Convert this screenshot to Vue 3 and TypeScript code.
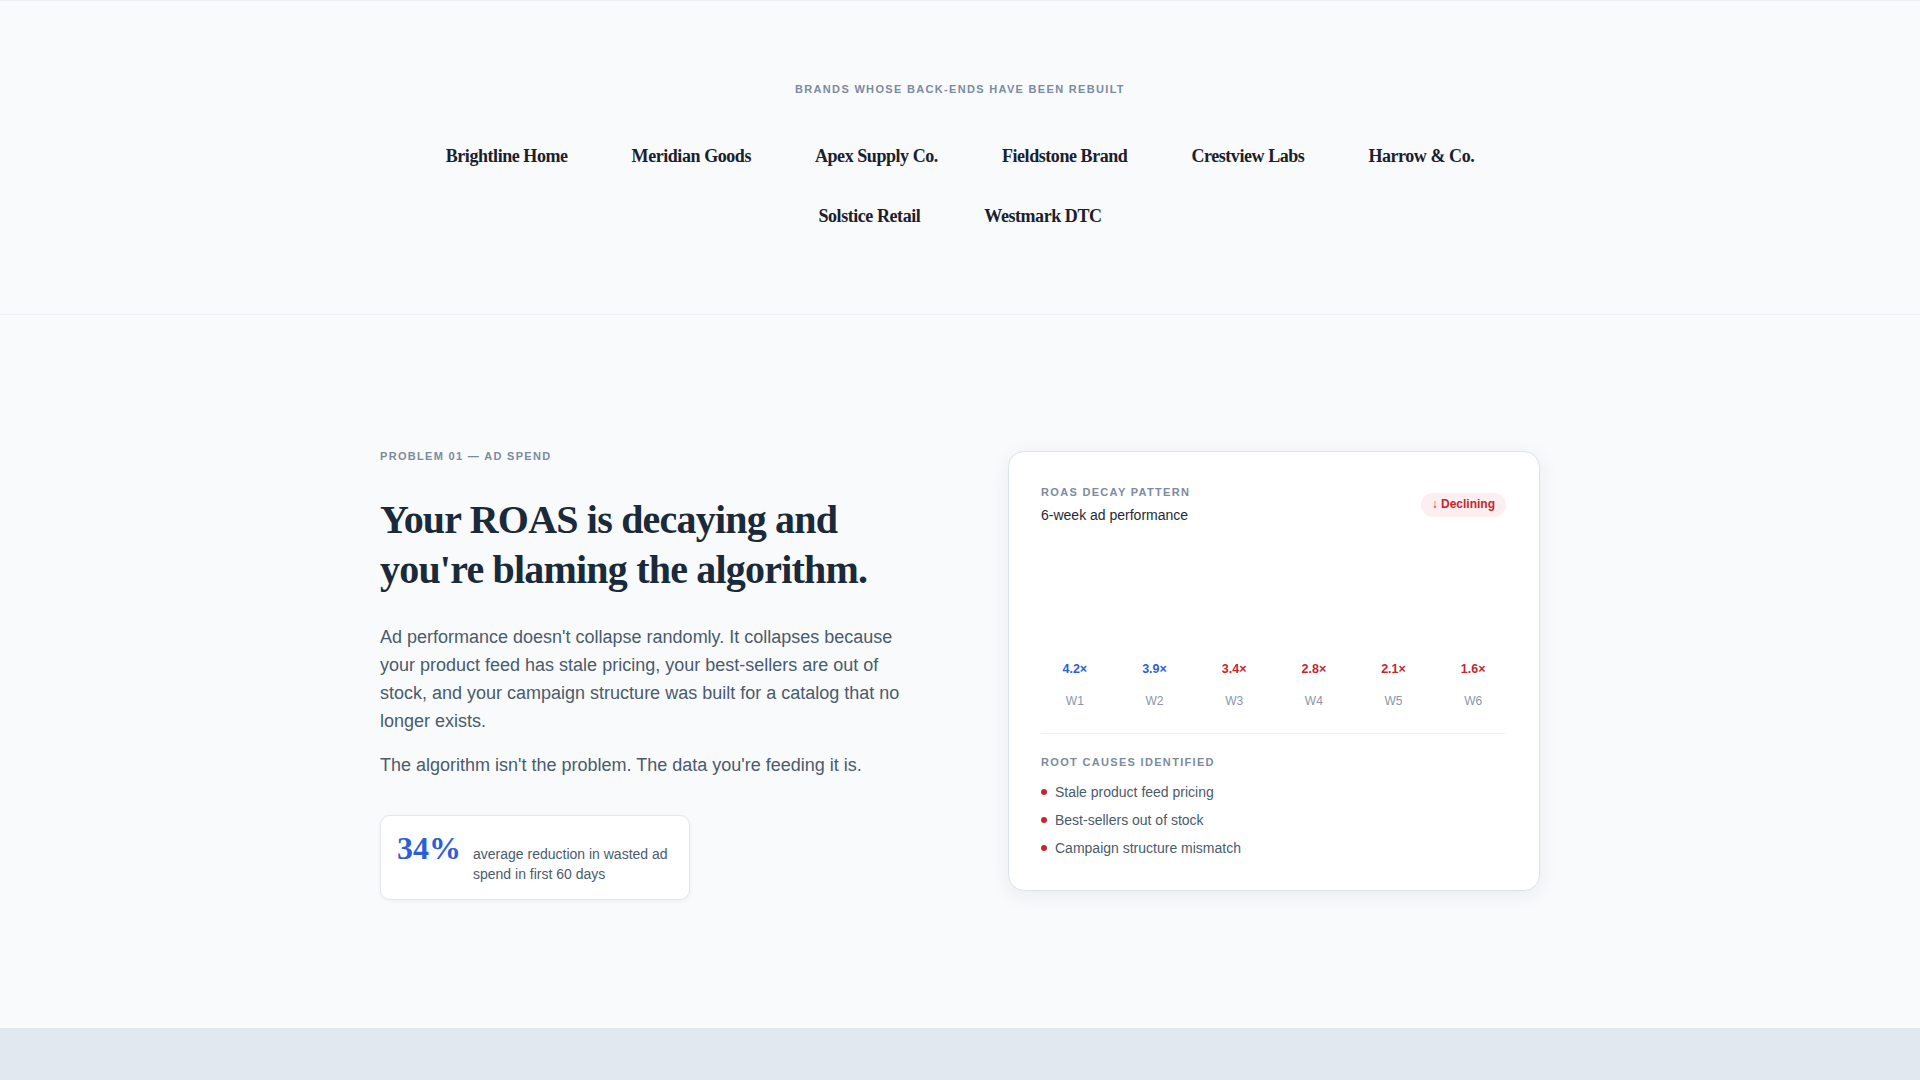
<template>
  <div class="page">
    <section class="brands">
      <p class="brands-label">BRANDS WHOSE BACK-ENDS HAVE BEEN REBUILT</p>
      <div class="brands-list">
        <span v-for="brand in brands" :key="brand" class="brand">{{ brand }}</span>
      </div>
    </section>

    <section class="problem">
      <div class="problem-inner">
        <div class="copy">
          <p class="eyebrow">PROBLEM 01 — AD SPEND</p>
          <h2 class="headline">Your ROAS is decaying and<br />you're blaming the algorithm.</h2>
          <p class="body">Ad performance doesn't collapse randomly. It collapses because your product feed has stale pricing, your best-sellers are out of stock, and your campaign structure was built for a catalog that no longer exists.</p>
          <p class="body">The algorithm isn't the problem. The data you're feeding it is.</p>
          <div class="stat">
            <span class="stat-number">34%</span>
            <span class="stat-text">average reduction in wasted ad spend in first 60 days</span>
          </div>
        </div>

        <div class="card">
          <div class="card-head">
            <div>
              <p class="card-label">ROAS DECAY PATTERN</p>
              <p class="card-title">6-week ad performance</p>
            </div>
            <span class="badge">↓ Declining</span>
          </div>

          <div class="chart">
            <div v-for="week in weeks" :key="week.name" class="week">
              <span class="week-value" :class="week.tone">{{ week.value }}</span>
              <span class="week-name">{{ week.name }}</span>
            </div>
          </div>

          <div class="causes">
            <p class="card-label">ROOT CAUSES IDENTIFIED</p>
            <ul class="cause-list">
              <li v-for="cause in causes" :key="cause" class="cause">{{ cause }}</li>
            </ul>
          </div>
        </div>
      </div>
    </section>

    <div class="next-band"></div>
  </div>
</template>

<script setup lang="ts">
interface Week {
  name: string
  value: string
  tone: 'good' | 'bad'
}

const brands: string[] = [
  'Brightline Home',
  'Meridian Goods',
  'Apex Supply Co.',
  'Fieldstone Brand',
  'Crestview Labs',
  'Harrow & Co.',
  'Solstice Retail',
  'Westmark DTC'
]

const weeks: Week[] = [
  { name: 'W1', value: '4.2×', tone: 'good' },
  { name: 'W2', value: '3.9×', tone: 'good' },
  { name: 'W3', value: '3.4×', tone: 'bad' },
  { name: 'W4', value: '2.8×', tone: 'bad' },
  { name: 'W5', value: '2.1×', tone: 'bad' },
  { name: 'W6', value: '1.6×', tone: 'bad' }
]

const causes: string[] = [
  'Stale product feed pricing',
  'Best-sellers out of stock',
  'Campaign structure mismatch'
]
</script>

<style>
html,
body {
  margin: 0;
  background: #f9fafc;
}
</style>

<style scoped>
.page {
  height: 1080px;
  overflow: hidden;
  background: #f9fafc;
  font-family: "Liberation Sans", Arial, sans-serif;
  display: flex;
  flex-direction: column;
}

.brands {
  height: 315px;
  box-sizing: border-box;
  padding: 81px 0 0;
  border-top: 1px solid #edf0f4;
  border-bottom: 1px solid #edf0f4;
  text-align: center;
}

.brands-label {
  margin: 0 0 44px;
  font-size: 11px;
  line-height: 14px;
  font-weight: 700;
  letter-spacing: 0.12em;
  color: #7c8ba1;
}

.brands-list {
  width: 1160px;
  margin: 0 auto;
  display: flex;
  flex-wrap: wrap;
  justify-content: center;
  gap: 28px 64px;
}

.brand {
  font-family: "Liberation Serif", "Times New Roman", serif;
  font-size: 18px;
  line-height: 32px;
  font-weight: 700;
  letter-spacing: -0.44px;
  color: #1a202c;
}

.problem {
  flex: 1;
  display: flex;
  align-items: center;
  justify-content: center;
}

.problem-inner {
  width: 1160px;
  display: grid;
  grid-template-columns: 532px 532px;
  gap: 96px;
  align-items: center;
}

.copy {
  padding-top: 6px;
}

.eyebrow {
  margin: 0 0 32px;
  font-size: 11px;
  line-height: 14px;
  font-weight: 700;
  letter-spacing: 0.12em;
  color: #7c8ba1;
}

.headline {
  margin: 0 0 28px;
  font-family: "Liberation Serif", "Times New Roman", serif;
  font-size: 40px;
  line-height: 50px;
  font-weight: 700;
  letter-spacing: -0.02em;
  color: #1a2a3a;
}

.body {
  margin: 0 0 16px;
  font-size: 18px;
  line-height: 28px;
  color: #4a5b6c;
}

.stat {
  margin-top: 20px;
  display: inline-flex;
  align-items: flex-start;
  gap: 12px;
  padding: 16px 16px 14px;
  background: #fff;
  border: 1px solid #e2e8f0;
  border-radius: 10px;
  box-shadow: 0 1px 4px rgba(0, 0, 0, 0.05);
}

.stat-number {
  font-family: "Liberation Serif", "Times New Roman", serif;
  font-size: 32px;
  line-height: 32px;
  font-weight: 700;
  color: #2b5fd9;
}

.stat-text {
  width: 200px;
  margin-top: 13px;
  font-size: 14px;
  line-height: 19.6px;
  color: #4a5b6c;
}

.card {
  box-sizing: border-box;
  margin-bottom: 2px;
  padding: 33px 32px 28px;
  background: #fff;
  border: 1px solid #dde3ea;
  border-radius: 16px;
  box-shadow: 0 4px 20px rgba(26, 42, 58, 0.07);
}

.card-head {
  display: flex;
  justify-content: space-between;
  align-items: center;
}

.card-label {
  margin: 0;
  font-size: 11px;
  line-height: 14px;
  font-weight: 700;
  letter-spacing: 0.12em;
  color: #7c8ba1;
}

.card-title {
  margin: 6px 0 0;
  font-size: 14px;
  line-height: 20px;
  color: #1e2a38;
}

.badge {
  margin-right: 1px;
  padding: 4px 11px 5px;
  font-size: 12px;
  line-height: 15px;
  font-weight: 700;
  color: #c8252d;
  background: #fdeef0;
  border-radius: 12px;
}

.chart {
  height: 183px;
  display: flex;
  align-items: flex-end;
  gap: 12px;
}

.week {
  flex: 1;
  display: flex;
  flex-direction: column;
  align-items: center;
  gap: 18px;
}

.week-value {
  font-size: 12.5px;
  line-height: 14px;
  font-weight: 700;
}

.week-value.good {
  color: #2b5fd9;
}

.week-value.bad {
  color: #c8252d;
}

.week-name {
  font-size: 12px;
  line-height: 14px;
  color: #8a97a8;
}

.causes {
  margin-top: 25px;
  margin-right: 2px;
  padding-top: 21px;
  border-top: 1px solid #edf0f4;
}

.cause-list {
  margin: 9px 0 0;
  padding: 0;
  list-style: none;
}

.cause {
  position: relative;
  padding-left: 14px;
  font-size: 14px;
  line-height: 28px;
  color: #4a5b6c;
}

.cause::before {
  content: '';
  position: absolute;
  left: 0;
  top: 11px;
  width: 6px;
  height: 6px;
  border-radius: 50%;
  background: #c8252d;
}

.next-band {
  height: 52px;
  flex: none;
  background: #e2e8f0;
}
</style>
